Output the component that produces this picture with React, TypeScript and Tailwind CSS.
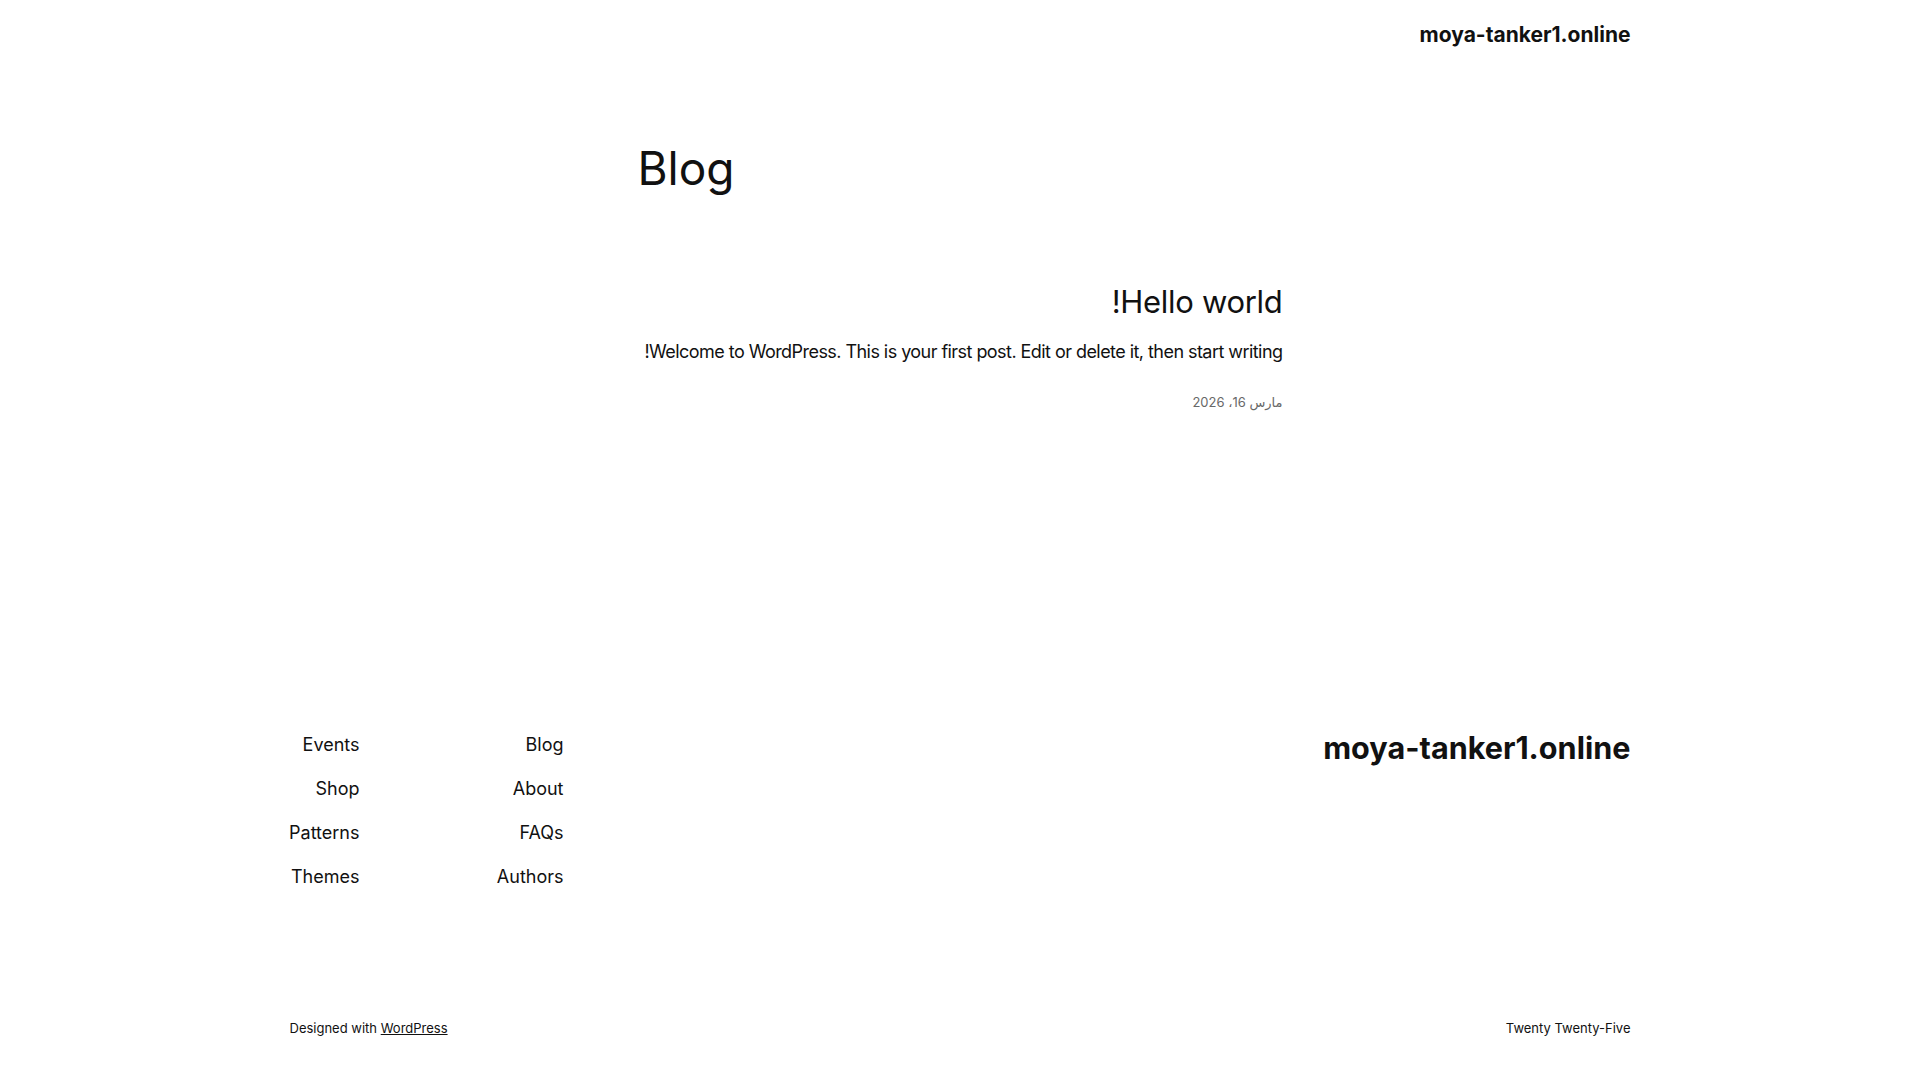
import React from 'react';

const font = "font-['Inter','DejaVu_Sans','Noto_Sans',sans-serif]";

const navPrimary = ['Blog', 'About', 'FAQs', 'Authors'];
const navSecondary = ['Events', 'Shop', 'Patterns', 'Themes'];

const App: React.FC = () => {
  return (
    <div dir="rtl" className={`min-h-screen bg-white text-[#111111] ${font}`}>
      {/* Header */}
      <header className="mx-auto w-[1341px] pt-[21px] flex justify-start">
        <a href="#" className="text-[21px] leading-[27px] font-bold">
          moya-tanker1.online
        </a>
      </header>

      {/* Main */}
      <main className="mx-auto w-[645px]">
        <h1 className="mt-[93px] text-left text-[46px] leading-[55px] font-normal">Blog</h1>

        <article className="mt-[87px]">
          <h2 className="text-[31px] leading-[37px] font-normal tracking-[-0.3px]">
            <a href="#">Hello world!</a>
          </h2>
          <p className="mt-[18px] text-[18px] leading-[27px] tracking-[-0.55px] whitespace-nowrap">
            Welcome to WordPress. This is your first post. Edit or delete it, then start writing!
          </p>
          <div className="mt-[27px] text-[13px] leading-[20px] text-[#686868]">مارس 16، 2026</div>
        </article>
      </main>

      {/* Footer */}
      <footer className="mx-auto w-[1341px] mt-[319px] pb-[40px]">
        <div className="flex justify-between items-start">
          <a href="#" className="text-[30.6px] leading-[37px] font-bold -mt-[2px]">
            moya-tanker1.online
          </a>
          <div className="flex justify-between w-[274px]">
            <nav className="flex flex-col items-start gap-[17px]">
              {navPrimary.map(item => (
                <a key={item} href="#" className="text-[18px] leading-[27px]">{item}</a>
              ))}
            </nav>
            <nav className="flex flex-col items-start gap-[17px] w-[70px]">
              {navSecondary.map(item => (
                <a key={item} href="#" className="text-[18px] leading-[27px] whitespace-nowrap">{item}</a>
              ))}
            </nav>
          </div>
        </div>

        <div className="mt-[128px] flex justify-between text-[13px] leading-[20px]">
          <p>Twenty Twenty-Five</p>
          <p>
            Designed with <a href="#" className="underline">WordPress</a>
          </p>
        </div>
      </footer>
    </div>
  );
};

export default App;
